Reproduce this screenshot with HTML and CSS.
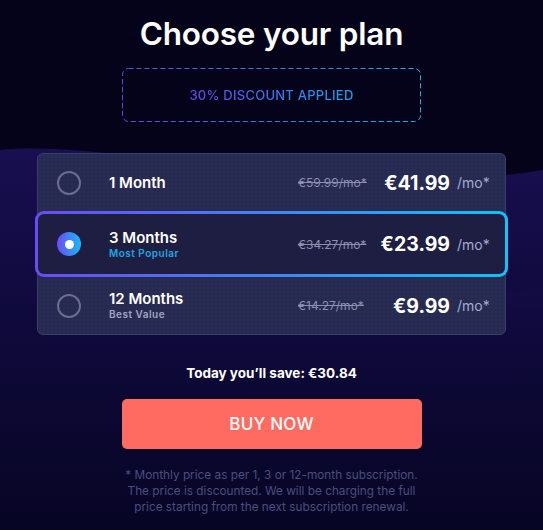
FILE: index.html
```html
<!DOCTYPE html>
<html lang="en">
<head>
<meta charset="utf-8">
<title>Choose your plan</title>
<link rel="stylesheet" href="styles.css">
</head>
<body>
<svg class="bg-wave" viewBox="0 0 543 530" preserveAspectRatio="none" aria-hidden="true">
  <defs>
    <linearGradient id="wg" x1="0" y1="0" x2="0" y2="1">
      <stop offset="0" stop-color="#180f50"/>
      <stop offset="0.45" stop-color="#0f0a3c"/>
      <stop offset="1" stop-color="#070524"/>
    </linearGradient>
    <linearGradient id="wg2" x1="0" y1="0" x2="0" y2="1">
      <stop offset="0" stop-color="#140d48" stop-opacity="0.9"/>
      <stop offset="1" stop-color="#0a0730" stop-opacity="0"/>
    </linearGradient>
  </defs>
  <path d="M0,150 C120,138 330,205 543,170 L543,530 L0,530 Z" fill="url(#wg)"/>
  <path d="M0,345 C180,330 380,300 543,288 L543,420 L0,420 Z" fill="url(#wg2)" opacity="0.5"/>
</svg>
<main class="page">
  <h1 class="title">Choose your plan</h1>
  <div class="discount">
    <svg class="discount-border" width="299" height="54" viewBox="0 0 299 54">
      <defs>
        <linearGradient id="dg" x1="0" y1="0" x2="1" y2="0">
          <stop offset="0" stop-color="#6a45e6"/>
          <stop offset="1" stop-color="#14b4f2"/>
        </linearGradient>
      </defs>
      <rect x="0.5" y="0.5" width="298" height="53" rx="6" ry="6" fill="none" stroke="url(#dg)" stroke-width="1" stroke-dasharray="5 3"/>
    </svg>
    <span class="discount-text">30% DISCOUNT APPLIED</span>
  </div>

  <div class="plans">
    <div class="plan">
      <span class="radio"></span>
      <div class="plan-name"><span class="plan-title">1 Month</span></div>
      <span class="old-price">€59.99/mo*</span>
      <span class="price">€41.99</span>
      <span class="per">/mo*</span>
    </div>
    <div class="plan plan-selected">
      <span class="radio radio-on"><span class="radio-dot"></span></span>
      <div class="plan-name"><span class="plan-title">3 Months</span><span class="plan-sub plan-sub-blue">Most Popular</span></div>
      <span class="old-price">€34.27/mo*</span>
      <span class="price">€23.99</span>
      <span class="per">/mo*</span>
    </div>
    <div class="plan">
      <span class="radio"></span>
      <div class="plan-name"><span class="plan-title">12 Months</span><span class="plan-sub">Best Value</span></div>
      <span class="old-price">€14.27/mo*</span>
      <span class="price">€9.99</span>
      <span class="per">/mo*</span>
    </div>
  </div>

  <p class="save">Today you’ll save: €30.84</p>
  <button class="buy">BUY NOW</button>
  <p class="note">* Monthly price as per 1, 3 or 12-month subscription.<br>The price is discounted. We will be charging the full<br>price starting from the next subscription renewal.</p>
</main>
</body>
</html>
```

FILE: styles.css
```css
* { box-sizing: border-box; }

html, body {
  margin: 0;
  height: 100%;
}

body {
  background: #04031a;
  font-family: "Inter", "DejaVu Sans", sans-serif;
  color: #fff;
  position: relative;
  overflow: hidden;
}

.bg-wave {
  position: absolute;
  left: 0;
  top: 0;
  width: 100%;
  height: 100%;
  z-index: 0;
}

.page {
  position: relative;
  z-index: 1;
  display: flex;
  flex-direction: column;
  align-items: center;
  padding-top: 16px;
}

.title {
  margin: 0;
  font-size: 31.5px;
  line-height: 36px;
  font-weight: 600;
  letter-spacing: -0.2px;
}

.discount {
  position: relative;
  margin-top: 16px;
  width: 299px;
  height: 54px;
  display: flex;
  align-items: center;
  justify-content: center;
}

.discount-border {
  position: absolute;
  left: 0;
  top: 0;
}

.discount-text {
  font-size: 13px;
  font-weight: 500;
  letter-spacing: 0.25px;
  background: linear-gradient(90deg, #6a42ea, #16a6f2);
  -webkit-background-clip: text;
  background-clip: text;
  color: transparent;
}

.plans {
  margin-top: 31px;
  width: 469px;
  border: 1px solid #3b3e68;
  border-radius: 6px;
  background-color: #262950;
  background-image: radial-gradient(circle, rgba(255,255,255,0.05) 0.6px, transparent 0.8px);
  background-size: 4px 4px;
  display: flex;
  flex-direction: column;
}

.plan {
  display: grid;
  grid-template-columns: 24px 1fr 80px 72px 36px;
  align-items: center;
  height: 57px;
  padding: 0 19px;
}

.plan-selected {
  height: 66px;
  margin: 0 -3px;
  padding: 0 19px;
  border: 3px solid transparent;
  border-radius: 9px;
  background: linear-gradient(#1d1e41, #1d1e41) padding-box,
              linear-gradient(90deg, #6a4cf4, #3d8af6 55%, #12c2f8) border-box;
}

.radio {
  width: 24px;
  height: 24px;
  border-radius: 50%;
  border: 2px solid #6a6d8d;
  display: flex;
  align-items: center;
  justify-content: center;
}

.radio-on {
  border: none;
  background: linear-gradient(90deg, #6a4cf4, #19b8f7);
}

.radio-dot {
  width: 9px;
  height: 9px;
  border-radius: 50%;
  background: #fff;
}

.plan-name {
  margin-left: 28px;
  display: flex;
  flex-direction: column;
}

.plan-title {
  font-size: 15px;
  line-height: 18px;
  font-weight: 600;
  color: #fff;
}

.plan-sub {
  font-size: 10px;
  line-height: 13px;
  font-weight: 600;
  letter-spacing: 0.5px;
  color: #a3a6c6;
}

.plan-sub-blue {
  color: #1fa6e2;
}

.old-price {
  font-size: 12px;
  color: #8c8fb0;
  text-decoration: line-through;
  white-space: nowrap;
}

.price {
  font-size: 19.5px;
  font-weight: 700;
  text-align: right;
  color: #fff;
  white-space: nowrap;
}

.per {
  padding-left: 7px;
  font-size: 14px;
  color: #a4abd3;
  white-space: nowrap;
}

.save {
  margin: 28px 0 0;
  font-size: 13.5px;
  line-height: 20px;
  font-weight: 700;
  color: #fff;
}

.buy {
  margin-top: 16px;
  width: 300px;
  height: 50px;
  border: none;
  border-radius: 5px;
  background: #ff6b60;
  color: #fff;
  font-family: inherit;
  font-size: 17px;
  font-weight: 500;
  letter-spacing: 0.2px;
}

.note {
  margin: 18px 0 0;
  font-size: 11.8px;
  line-height: 16px;
  color: #4a4e80;
  text-align: center;
}
```
